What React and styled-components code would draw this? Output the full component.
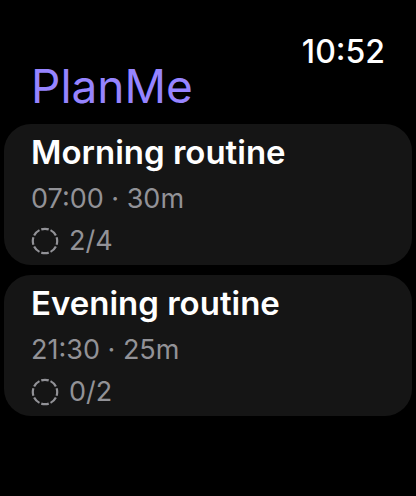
import React from 'react'
import styled, { createGlobalStyle } from 'styled-components'

const GlobalStyle = createGlobalStyle`
  body {
    margin: 0;
    background: #000;
    font-family: Inter, 'Liberation Sans', sans-serif;
  }
`

const Screen = styled.div`
  padding: 36px 4px;
`

const Header = styled.header`
  padding: 0 27px;
`

const Clock = styled.time`
  display: block;
  text-align: right;
  font-size: 32px;
  line-height: 32px;
  font-weight: 500;
  color: #fff;
`

const Title = styled.h1`
  margin: 0;
  font-size: 46px;
  line-height: 36px;
  font-weight: 400;
  color: #9684ff;
`

const RoutineList = styled.ul`
  list-style: none;
  margin: 20px 0 0;
  padding: 0;
  display: flex;
  flex-direction: column;
  gap: 10px;
`

const Card = styled.li`
  background: #151515;
  border-radius: 27px;
  padding: 7px 27px 3px;
`

const Name = styled.h2`
  margin: 0 0 5px;
  font-size: 33px;
  line-height: 42px;
  font-weight: 600;
  color: #fff;
`

const Detail = styled.p`
  margin: 0;
  display: flex;
  align-items: center;
  gap: 10px;
  font-size: 27px;
  line-height: 42px;
  color: #929297;
`

const ProgressIcon = () => (
  <svg width="28" height="28" viewBox="0 0 28 28" fill="none" aria-hidden="true">
    <circle
      cx="14"
      cy="14"
      r="12.2"
      stroke="currentColor"
      strokeWidth="2.2"
      pathLength="80"
      strokeDasharray="8 2"
      strokeDashoffset="4"
    />
  </svg>
)

const routines = [
  { name: 'Morning routine', start: '07:00', length: '30m', done: 2, total: 4 },
  { name: 'Evening routine', start: '21:30', length: '25m', done: 0, total: 2 },
]

const App = () => (
  <Screen>
    <GlobalStyle />
    <Header>
      <Clock>10:52</Clock>
      <Title>PlanMe</Title>
    </Header>
    <RoutineList>
      {routines.map(({ name, start, length, done, total }) => (
        <Card key={name}>
          <Name>{name}</Name>
          <Detail>{`${start} · ${length}`}</Detail>
          <Detail>
            <ProgressIcon />
            {`${done}/${total}`}
          </Detail>
        </Card>
      ))}
    </RoutineList>
  </Screen>
)

export default App
